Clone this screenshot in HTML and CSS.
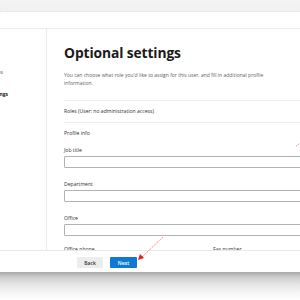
FILE: index.html
```html
<!DOCTYPE html>
<html>
<head>
<meta charset="utf-8">
<link rel="stylesheet" href="styles.css">
</head>
<body>
<div class="page">
  <div class="top-fade"></div>
  <div class="topbar"></div>
  <div class="main">
    <nav class="sidebar">
      <div class="nav-item nav-1">Product licenses</div>
      <div class="nav-item nav-2 active">Optional settings</div>
    </nav>
    <section class="content">
      <h1 class="title">Optional settings</h1>
      <p class="desc">You can choose what role you'd like to assign for this user, and fill in additional profile information.</p>
      <div class="row row-roles">Roles (User: no administration access)</div>
      <div class="row row-profile">Profile info</div>
      <div class="field"><label>Job title</label><div class="input"></div></div>
      <div class="field"><label>Department</label><div class="input"></div></div>
      <div class="field"><label>Office</label><div class="input"></div></div>
      <div class="field-pair">
        <div class="field"><label>Office phone</label></div>
        <div class="field"><label>Fax number</label></div>
      </div>
    </section>
  </div>
  <footer class="footer">
    <button class="btn btn-back">Back</button>
    <button class="btn btn-next">Next</button>
  </footer>
  <div class="bottom-fade"></div>
  <svg class="arrows" width="300" height="300" viewBox="0 0 300 300">
    <line x1="163" y1="237" x2="142" y2="257" stroke="#f06a6a" stroke-width="0.8" stroke-dasharray="1.5 0.8"/>
    <polygon points="138,260 140,254 144,258" fill="#e81e1e"/>
    <line x1="296" y1="146" x2="302" y2="142" stroke="#f08a8a" stroke-width="0.9" stroke-dasharray="1.5 0.8"/>
  </svg>
</div>
</body>
</html>
```
FILE: styles.css
```css
* { box-sizing: border-box; }
html, body { margin: 0; padding: 0; }
body {
  width: 300px;
  height: 300px;
  overflow: hidden;
  background: #fff;
  font-family: "Open Sans", "Noto Sans", "Liberation Sans", sans-serif;
  color: #323130;
}
.page {
  position: relative;
  width: 300px;
  height: 300px;
  display: flex;
  flex-direction: column;
  overflow: hidden;
}
.top-fade {
  height: 12px;
  flex: none;
  background: linear-gradient(#f4f4f4, #f1f1f1);
  border-bottom: 1px dotted #e6e6e6;
}
.topbar {
  height: 17px;
  flex: none;
  border-bottom: 1px solid #ececec;
}
.main {
  height: 221px;
  flex: none;
  display: flex;
  overflow: hidden;
}
.sidebar {
  width: 47px;
  flex: none;
  border-right: 1px solid #ececec;
  overflow: hidden;
  display: flex;
  flex-direction: column;
}
.nav-item {
  font-size: 5px;
  white-space: nowrap;
  display: flex;
  justify-content: flex-end;
  color: #444;
}
.nav-1 { width: 3px; margin-top: 40px; }
.nav-2 { width: 8px; margin-top: 16px; }
.nav-item.active { font-weight: 700; color: #222; }
.content {
  flex: 1;
  padding-left: 17px;
  min-width: 0;
}
.title {
  margin: 14px 0 0;
  font-size: 13.8px;
  font-weight: 700;
  color: #1b1a19;
  letter-spacing: -0.1px;
  white-space: nowrap;
}
.desc {
  margin: 9px 0 0;
  font-size: 5px;
  line-height: 8px;
  color: #605e5c;
  width: 215px;
}
.row {
  font-size: 5.1px;
  color: #323130;
  white-space: nowrap;
}
.row-roles {
  margin-top: 13px;
  border-top: 1px solid #ededed;
  border-bottom: 1px solid #ededed;
  padding: 7px 0 8px;
}
.row-profile {
  padding-top: 7px;
}
.field label {
  display: block;
  font-size: 5.1px;
  color: #323130;
  white-space: nowrap;
}
.field {
  margin-top: 11px;
}
.field + .field { margin-top: 13px; }
.input {
  margin-top: 3px;
  height: 12px;
  width: 260px;
  border: 1px solid #b3b3b3;
  border-radius: 1px;
}
.field-pair {
  display: flex;
  margin-top: 10px;
}
.field-pair .field { margin-top: 0; width: 149px; flex: none; }
.footer {
  height: 22px;
  flex: none;
  background: #fff;
  border-top: 1px solid #eaeaea;
  display: flex;
  align-items: flex-start;
  padding: 6px 0 0 77px;
  gap: 7px;
}
.btn {
  height: 11px;
  border: none;
  border-radius: 1px;
  font-family: inherit;
  font-size: 5px;
  padding: 0;
  font-weight: 600;
}
.btn-back { width: 26px; background: #ededed; color: #323130; }
.btn-next { width: 27px; background: #0f78d4; color: #fff; }
.bottom-fade {
  flex: 1;
  background: linear-gradient(#a9a9a9 0%, #d0d0d0 20%, #e6e6e6 45%, #f6f6f6 75%, #fff 100%);
}
.arrows {
  position: absolute;
  left: 0;
  top: 0;
  pointer-events: none;
}
```
